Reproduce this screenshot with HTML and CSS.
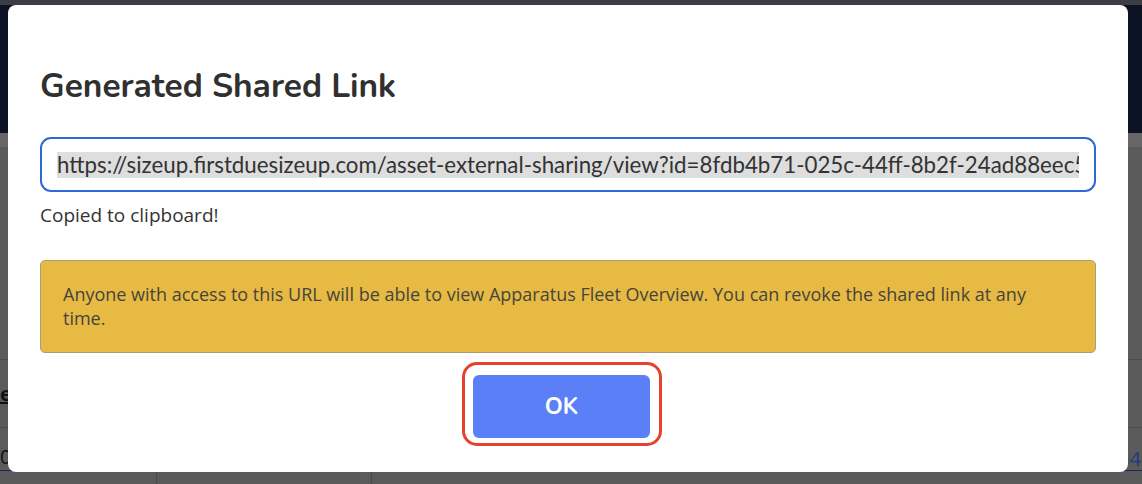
FILE: index.html
```html
<!DOCTYPE html>
<html lang="en">
<head>
<meta charset="utf-8">
<title>Generated Shared Link</title>
<link rel="stylesheet" href="styles.css">
</head>
<body>
<div class="page">
  <div class="topbar"></div>
  <div class="header"></div>
  <div class="subbar"></div>
  <div class="content">
    <div class="row row-a"></div>
    <div class="row row-b"><span class="under">e</span></div>
    <div class="row row-c"><span class="num">0</span><span class="link">a4</span></div>
    <div class="row row-d">
      <div class="cell c1"></div>
      <div class="cell c2"></div>
      <div class="cell c3"></div>
    </div>
  </div>
</div>

<div class="modal" role="dialog" aria-labelledby="modal-title">
  <h2 class="modal-title" id="modal-title">Generated Shared Link</h2>
  <div class="url-field">
    <span class="url-text">https://sizeup.firstduesizeup.com/asset-external-sharing/view?id=8fdb4b71-025c-44ff-8b2f-24ad88eec5</span>
  </div>
  <p class="copied">Copied to clipboard!</p>
  <div class="alert">Anyone with access to this URL will be able to view Apparatus Fleet Overview. You can revoke the shared link at any time.</div>
  <div class="actions">
    <div class="ring"><button class="ok-btn" type="button">OK</button></div>
  </div>
</div>
</body>
</html>
```
FILE: styles.css
```css
* { box-sizing: border-box; }
html, body { margin: 0; padding: 0; }
body {
  width: 1142px;
  height: 484px;
  overflow: hidden;
  position: relative;
  background: #5a5a5a;
  font-family: "Open Sans", "Noto Sans", sans-serif;
}

/* dimmed page behind the dialog */
.page { display: flex; flex-direction: column; height: 484px; }
.topbar { height: 5px; background: #3b3d43; }
.header { height: 128px; background: #0b1323; }
.subbar { height: 14px; background: #666666; }
.content { flex: 1; display: flex; flex-direction: column; }
.row { border-bottom: 1px solid #4c4c4c; }
.row-a { height: 213px; }
.row-b { height: 68px; display: flex; align-items: center; }
.under {
  font-size: 20px;
  font-weight: 700;
  color: #111;
  text-decoration: underline;
  line-height: 24px;
}
.row-c {
  height: 43px;
  display: flex;
  align-items: flex-end;
  justify-content: space-between;
  border-bottom: 1px solid #1c2b55;
}
.num { font-size: 20px; color: #111; line-height: 26px; }
.link { font-size: 20px; color: #203a7a; line-height: 22px; padding-right: 1px; }
.row-d { flex: 1; display: flex; border-bottom: none; }
.cell { border-right: 1px solid #4a4a4a; }
.c1 { width: 157px; }
.c2 { width: 215px; }
.c3 { flex: 1; border-right: none; }

/* dialog */
.modal {
  position: absolute;
  left: 8px;
  top: 5px;
  width: 1120px;
  height: 467px;
  background: #ffffff;
  border-radius: 8px;
  padding: 0 32px;
  display: flex;
  flex-direction: column;
}
.modal-title {
  margin: 61px 0 0 0;
  font-family: "Nunito", "Open Sans", sans-serif;
  font-size: 33.5px;
  line-height: 40px;
  font-weight: 700;
  color: #303030;
}
.url-field {
  margin-top: 31px;
  height: 55px;
  border: 2px solid #2e69d4;
  border-radius: 11px;
  padding: 0 15px;
  display: flex;
  align-items: center;
  overflow: hidden;
  white-space: nowrap;
}
.url-text {
  display: block;
  overflow: hidden;
  width: 100%;
  font-family: "Lato", sans-serif;
  font-size: 22.3px;
  line-height: 26px;
  color: #333333;
  background: #dedede;
}
.copied {
  margin: 10px 0 0 0;
  font-size: 19px;
  line-height: 26px;
  color: #333333;
}
.alert {
  margin-top: 32px;
  height: 93px;
  background: #e6ba43;
  border: 1px solid #a99d7a;
  border-radius: 5px;
  padding: 21px 22px;
  font-size: 18px;
  line-height: 24px;
  color: #47443e;
}
.actions {
  margin-top: 9px;
  display: flex;
  justify-content: center;
  padding-right: 12px;
}
.ring {
  border: 3px solid #e5412d;
  border-radius: 15px;
  padding: 10px 9px 5px 8px;
  background: #ffffff;
}
.ok-btn {
  display: block;
  width: 177px;
  height: 63px;
  border: none;
  border-radius: 6px;
  background: #5a7ff7;
  color: #ffffff;
  font-family: "Nunito", "Open Sans", sans-serif;
  font-weight: 700;
  font-size: 23px;
}
```
